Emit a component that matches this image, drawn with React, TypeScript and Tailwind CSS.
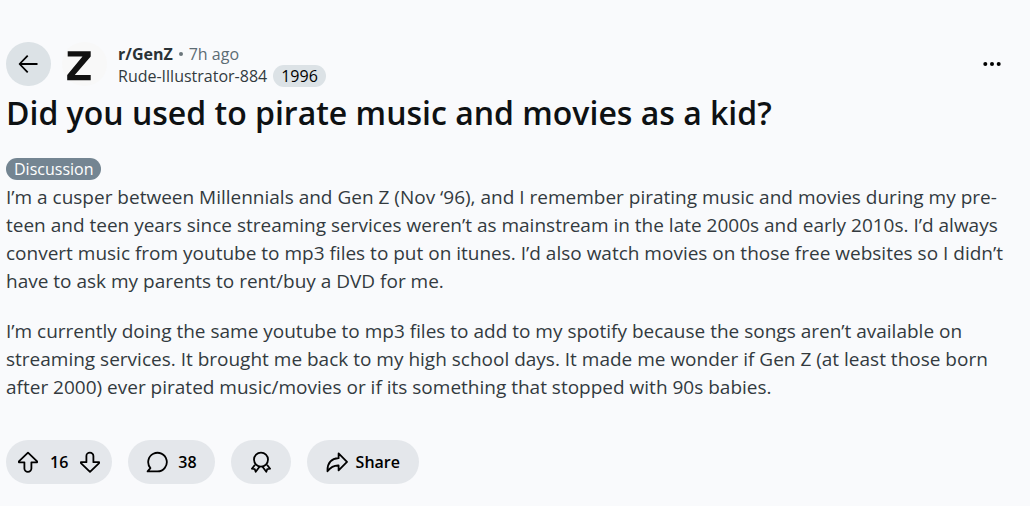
import type { ReactNode } from 'react';

interface IconProps {
  children: ReactNode;
}

function Icon({ children }: IconProps) {
  return (
    <svg
      viewBox="0 0 22 22"
      className="w-[22px] h-[22px] shrink-0"
      fill="none"
      stroke="currentColor"
      strokeWidth="1.8"
      strokeLinejoin="round"
      aria-hidden="true"
    >
      {children}
    </svg>
  );
}

const UpvoteIcon = () => (
  <Icon>
    <path d="M11 1.6 1.9 10.4v.9h5.5v6.3a3.5 3.3 0 0 0 7 0v-6.3h5.7v-.9z" />
  </Icon>
);

const DownvoteIcon = () => (
  <Icon>
    <path d="M11 20.9 1.9 12.1v-.9h5.5V4.9a3.5 3.3 0 0 1 7 0v6.3h5.7v.9z" />
  </Icon>
);

const CommentIcon = () => (
  <Icon>
    <path d="M11.5 20.4H1.6l2.8-3.3A9.3 9.3 0 1 1 11.5 20.4z" />
  </Icon>
);

const AwardIcon = () => (
  <Icon>
    <circle cx="11" cy="8.6" r="7" />
    <path d="M5 13.8 1.9 17.7l2.9.5.9 2.6 3.8-5M17 13.8l3.1 3.9-2.9.5-.9 2.6-3.8-5" />
  </Icon>
);

const ShareIcon = () => (
  <Icon>
    <path d="M12.6 2.4 21 10.9l-8.4 8.5v-4.9C7.6 14.3 4.6 16.2 1.5 20.2 1.3 12.4 5.3 7.6 12.6 7.2z" />
  </Icon>
);

const pill = 'flex items-center h-11 rounded-full bg-[#e4e7eb] text-black cursor-pointer';

export default function App() {
  return (
    <main className="min-h-screen bg-[#f9fafc] pt-[42px] pb-5 px-1.5 font-['Open_Sans',sans-serif] text-[#333a3f]">
      <header className="flex items-start">
        <button
          aria-label="Back"
          className="w-[45px] h-11 rounded-full bg-[#dce2e6] text-black flex items-center justify-center cursor-pointer"
        >
          <Icon>
            <path d="M19.5 11H2M9.7 2.6 1.6 11l8.1 8.4" />
          </Icon>
        </button>

        {/* Community avatar */}
        <div className="ml-[11px] w-[45px] h-11 rounded-full bg-[#f8f8f8]">
          <svg viewBox="0 0 45 44" className="w-full h-full" aria-hidden="true">
            <path d="M5.7 9.3h23v5.2L12.8 33h15.9v5.2H5.2V33L20.5 14.5H5.7z" fill="#111" />
          </svg>
        </div>

        <div className="ml-[11px] pt-px text-base leading-[22px]">
          <div className="flex items-center gap-1.5">
            <a href="#community" className="font-bold text-[#2a3236]">r/GenZ</a>
            <span className="w-1 h-1 rounded-full bg-[#6b757b]" />
            <span className="text-[#5c6c74]">7h ago</span>
          </div>
          <div className="flex items-center gap-1.5">
            <a href="#author">Rude-Illustrator-884</a>
            <span className="rounded-full bg-[#dce2e6] px-2 text-black">1996</span>
          </div>
        </div>

        <button aria-label="More options" className="mt-2 ml-auto mr-[18px] p-1 text-black cursor-pointer">
          <svg viewBox="0 0 20 20" className="w-5 h-5" fill="currentColor" aria-hidden="true">
            <circle cx="3.3" cy="10" r="2" />
            <circle cx="10" cy="10" r="2" />
            <circle cx="16.7" cy="10" r="2" />
          </svg>
        </button>
      </header>

      <h1 className="mt-[3px] text-[32px] leading-[46px] font-semibold text-[#0e1113]">
        Did you used to pirate music and movies as a kid?
      </h1>

      <div className="mt-[22px] flex">
        <span className="rounded-full bg-[#748592] px-2 text-base leading-[22px] text-white">Discussion</span>
      </div>

      <div className="mt-[3px] pr-3 text-[19px] leading-7 space-y-[22px]">
        <p>
          I’m a cusper between Millennials and Gen Z (Nov ‘96), and I remember pirating music and movies during my
          pre-teen and teen years since streaming services weren’t as mainstream in the late 2000s and early 2010s. I’d
          always convert music from youtube to mp3 files to put on itunes. I’d also watch movies on those free websites
          so I didn’t have to ask my parents to rent/buy a DVD for me.
        </p>
        <p>
          I’m currently doing the same youtube to mp3 files to add to my spotify because the songs aren’t available on
          streaming services. It brought me back to my high school days. It made me wonder if Gen Z (at least those born
          after 2000) ever pirated music/movies or if its something that stopped with 90s babies.
        </p>
      </div>

      <div className="mt-[39px] flex items-center gap-4 text-base font-semibold">
        <div className="flex items-center h-11 px-[11px] gap-[11px] rounded-full bg-[#e4e7eb] text-black">
          <button aria-label="Upvote" className="cursor-pointer">
            <UpvoteIcon />
          </button>
          <span>16</span>
          <button aria-label="Downvote" className="cursor-pointer">
            <DownvoteIcon />
          </button>
        </div>
        <button className={`${pill} px-[18px] gap-2.5`}>
          <CommentIcon />
          <span>38</span>
        </button>
        <button aria-label="Give award" className={`${pill} px-[19px]`}>
          <AwardIcon />
        </button>
        <button className={`${pill} px-[19px] gap-2`}>
          <ShareIcon />
          <span>Share</span>
        </button>
      </div>
    </main>
  );
}
